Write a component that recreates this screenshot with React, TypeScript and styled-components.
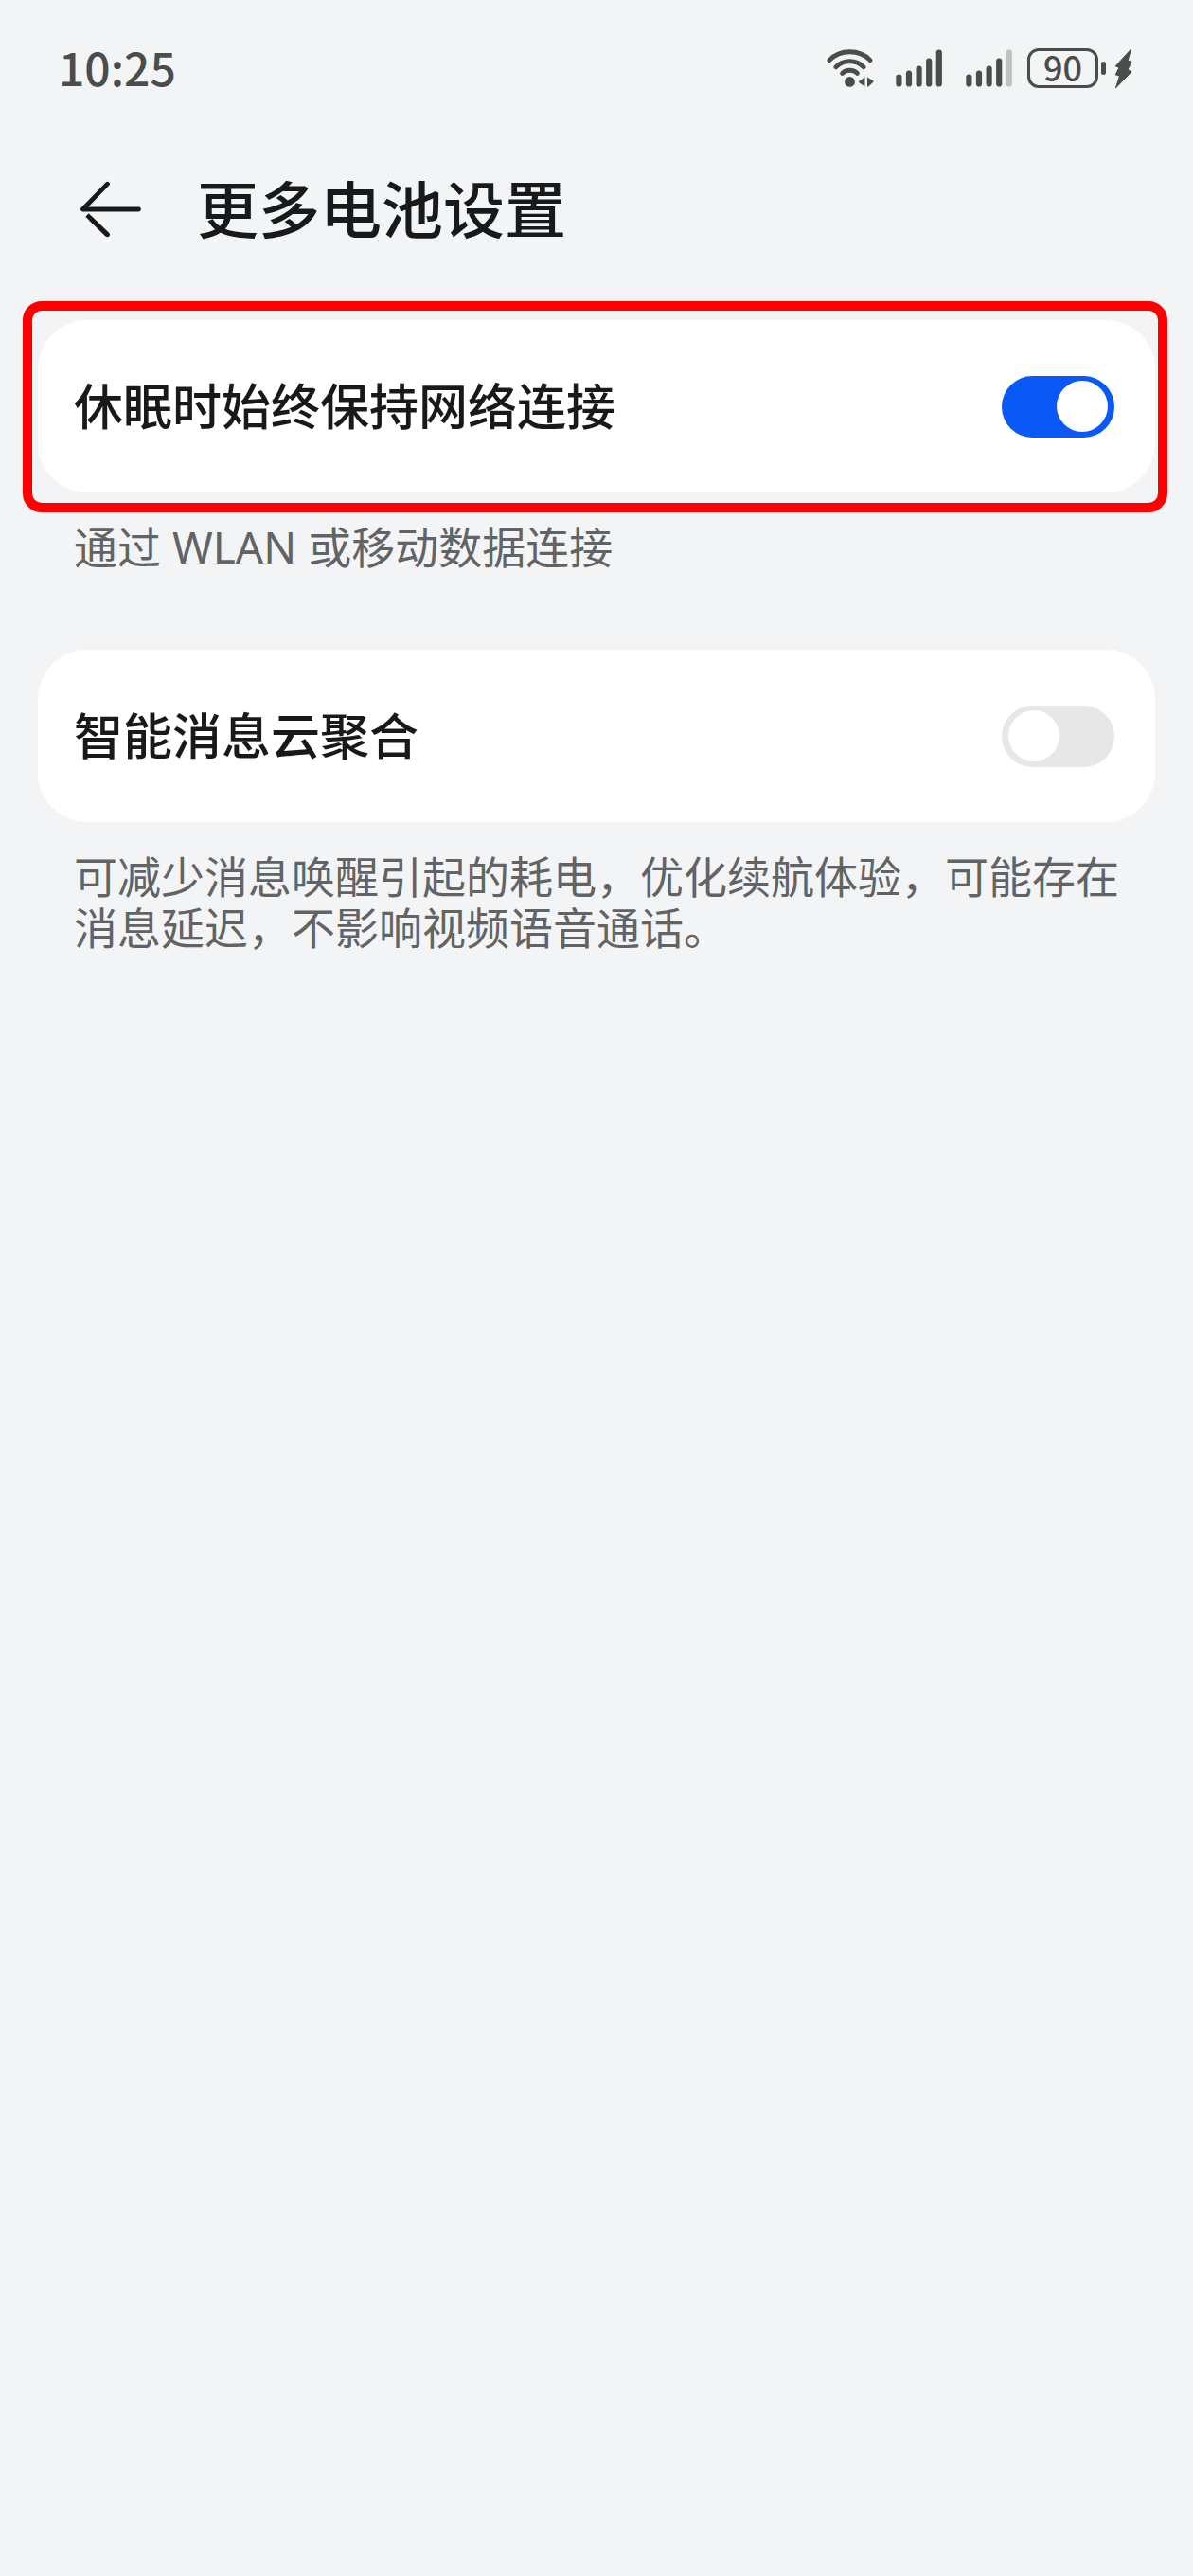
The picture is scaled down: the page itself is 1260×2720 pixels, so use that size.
import React, { useId, useState } from "react";
import styled, { createGlobalStyle } from "styled-components";

const GlobalStyle = createGlobalStyle`
  *, *::before, *::after { box-sizing: border-box; }
  html { background: #f2f4f6; }
  body {
    margin: 0;
    color: #18191a;
    font-family: "Noto Sans CJK SC", "Noto Sans", sans-serif;
  }
`;

const Page = styled.div`
  min-height: 100vh;
  background: #f2f4f6;
`;

const StatusBar = styled.div`
  display: flex;
  align-items: center;
  justify-content: space-between;
  height: 144px;
  padding: 0 64px 0 62px;
  color: #4b4c4c;
`;

const Clock = styled.time`
  padding-bottom: 4px;
  font-size: 48px;
  font-weight: 500;
  line-height: 60px;
`;

const StatusIcons = styled.div`
  display: flex;
  align-items: center;
  gap: 16px;

  svg { display: block; }
`;

const Signals = styled.div`
  display: flex;
  gap: 24px;
  margin-left: 5px;
`;

const BatteryGroup = styled.div`
  display: flex;
  align-items: center;
`;

const BatteryShell = styled.div`
  display: flex;
  align-items: center;
  justify-content: center;
  width: 75px;
  height: 42px;
  padding-bottom: 4px;
  border: 3px solid currentColor;
  border-radius: 12px;
  font-size: 36px;
  font-weight: 500;
  line-height: 36px;
`;

const BatteryTip = styled.div`
  width: 5px;
  height: 14px;
  margin: 0 9px 0 3px;
  border-radius: 3px;
  background: currentColor;
`;

const Header = styled.header`
  display: flex;
  align-items: center;
  gap: 58px;
  height: 154px;
  padding: 0 84px;
`;

const BackButton = styled.button`
  display: flex;
  padding: 0;
  border: 0;
  background: none;
  color: inherit;
  cursor: pointer;
`;

const Title = styled.h1`
  margin: 0;
  padding-bottom: 6px;
  font-size: 65px;
  font-weight: 500;
  line-height: 76px;
`;

const Content = styled.main`
  display: flex;
  flex-direction: column;
  gap: 82px;
  padding: 40px;
`;

const Card = styled.div`
  position: relative;
  display: flex;
  align-items: center;
  justify-content: space-between;
  height: 182px;
  padding: 0 43px 0 38px;
  border-radius: 52px;
  background: #fff;
`;

const Highlight = styled.div`
  position: absolute;
  inset: -20px -13px -21px -16px;
  border: 10px solid #f00;
  border-radius: 20px;
  pointer-events: none;
`;

const Label = styled.label`
  padding-bottom: 4px;
  font-size: 52px;
  font-weight: 500;
  line-height: 62px;
`;

const Toggle = styled.input`
  display: flex;
  align-items: center;
  flex: none;
  appearance: none;
  width: 119px;
  height: 65px;
  margin: 0;
  padding: 0 7px;
  border-radius: 33px;
  background: #e7e7e7;
  cursor: pointer;

  &::before {
    content: "";
    width: 54px;
    height: 54px;
    border-radius: 50%;
    background: #fff;
  }

  &:checked {
    justify-content: flex-end;
    background: #0a59f7;
  }
`;

const Description = styled.p`
  margin: 30px 30px 0 38px;
  color: #626364;
  font-family: "Noto Sans", "Noto Sans CJK SC", sans-serif;
  font-size: 46px;
  line-height: 54px;
`;

function WifiIcon() {
  return (
    <svg width="52" height="42" viewBox="0 0 52 42" fill="none" stroke="currentColor" strokeWidth="4.9" strokeLinecap="round" aria-label="WLAN">
      <path d="M3.9 12.6Q12.5 3.8 25.5 3.8T47.1 12.6" />
      <path d="M10.8 19.8Q16.5 13.7 25.5 13.7T40.2 19.8" />
      <path d="M17.6 26.4Q20.5 23.3 25.5 23.3T33.4 26.4" />
      <circle cx="25.5" cy="35.4" r="5.4" fill="currentColor" stroke="none" />
      <path d="M41.5 30.4V40.4L35 36V35ZM44 30.4L50.5 34.4V35.4L45.2 40.4H44Z" fill="currentColor" stroke="none" />
    </svg>
  );
}

const BAR_HEIGHTS = [13, 17, 22, 30, 39];

function SignalIcon({ level }: { level: number }) {
  return (
    <svg width="50" height="40" viewBox="0 0 50 40" fill="currentColor" aria-label="移动信号">
      {BAR_HEIGHTS.map((h, i) => (
        <rect key={h} x={1.3 + i * 10.6} y={39.5 - h} width="6.2" height={h} rx="3.1" opacity={i < level ? 1 : 0.3} />
      ))}
    </svg>
  );
}

function BoltIcon() {
  return (
    <svg width="19" height="43" viewBox="0 0 19 43" fill="currentColor" stroke="currentColor" strokeWidth="1" strokeLinejoin="round" aria-label="充电中">
      <path d="M17.5 1L1.2 18.8L5 20.5L1.2 27.8L5.5 29.3L1.4 42L18 24.8L14 22.5L18 14.6L14.2 12.8Z" />
    </svg>
  );
}

function BackIcon() {
  return (
    <svg width="66" height="60" viewBox="0 0 66 60" fill="none" stroke="currentColor" strokeWidth="4.8" strokeLinecap="round" aria-hidden="true">
      <path d="M29.5 3.2L3.5 30H62.5" strokeLinejoin="round" />
      <path d="M8 36L29.5 57" strokeLinecap="butt" />
      <path d="M12 40L29.5 56.8" />
    </svg>
  );
}

interface SettingProps {
  label: string;
  description: string;
  initial: boolean;
  highlighted?: boolean;
}

function Setting({ label, description, initial, highlighted }: SettingProps) {
  const id = useId();
  const [on, setOn] = useState(initial);
  return (
    <section>
      <Card>
        <Label htmlFor={id}>{label}</Label>
        <Toggle id={id} type="checkbox" role="switch" checked={on} onChange={(e) => setOn(e.target.checked)} />
        {highlighted && <Highlight />}
      </Card>
      <Description>{description}</Description>
    </section>
  );
}

export default function App() {
  return (
    <Page lang="zh-CN">
      <GlobalStyle />
      <StatusBar>
        <Clock>10:25</Clock>
        <StatusIcons>
          <WifiIcon />
          <Signals>
            <SignalIcon level={5} />
            <SignalIcon level={4} />
          </Signals>
          <BatteryGroup>
            <BatteryShell>90</BatteryShell>
            <BatteryTip />
            <BoltIcon />
          </BatteryGroup>
        </StatusIcons>
      </StatusBar>
      <Header>
        <BackButton type="button" aria-label="返回">
          <BackIcon />
        </BackButton>
        <Title>更多电池设置</Title>
      </Header>
      <Content>
        <Setting label="休眠时始终保持网络连接" description="通过 WLAN 或移动数据连接" initial highlighted />
        <Setting
          label="智能消息云聚合"
          description="可减少消息唤醒引起的耗电，优化续航体验，可能存在消息延迟，不影响视频语音通话。"
          initial={false}
        />
      </Content>
    </Page>
  );
}
